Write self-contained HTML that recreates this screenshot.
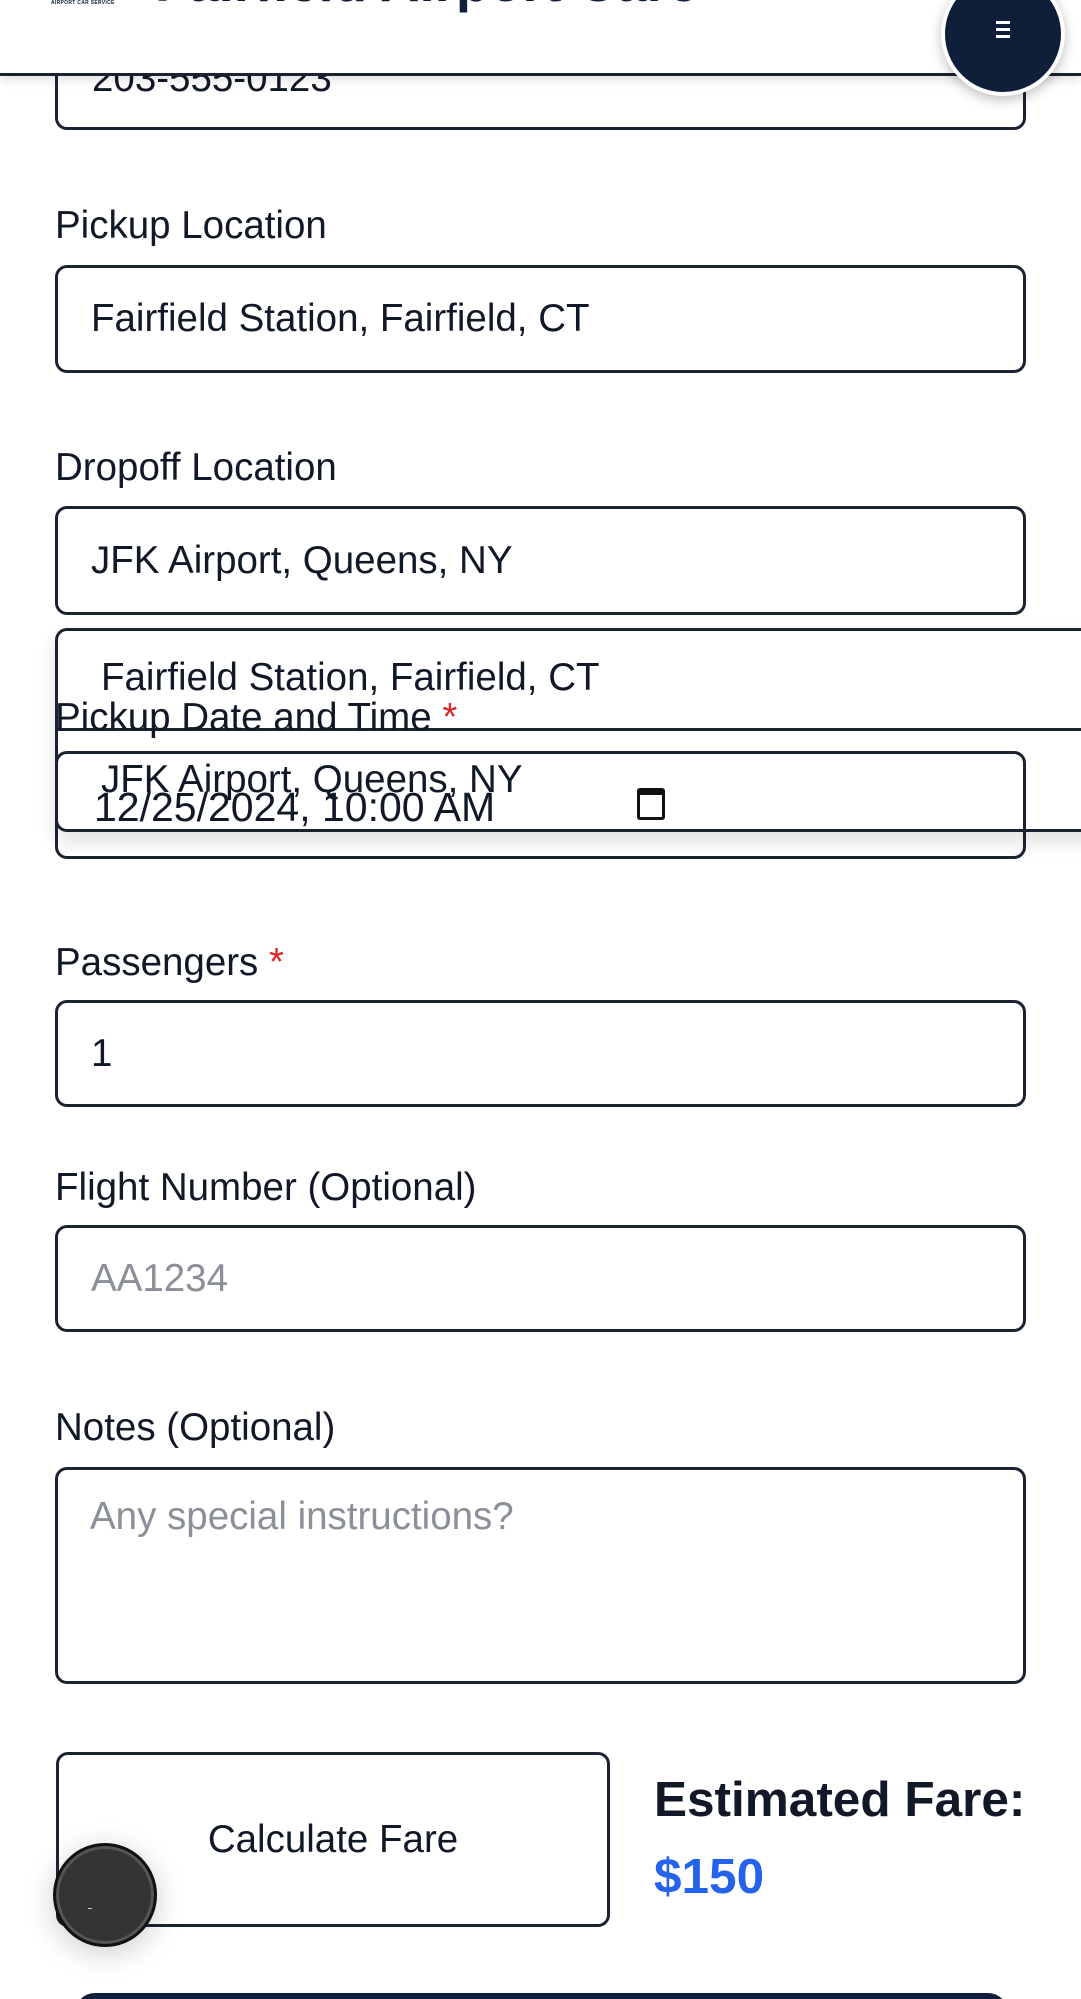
<!DOCTYPE html>
<html><head><meta charset="utf-8"><style>
*{margin:0;padding:0;box-sizing:border-box}
html,body{width:1081px;height:1999px;overflow:hidden;background:#fff;font-family:"Liberation Sans",Arial,sans-serif;color:#111827;position:relative}
.a{position:absolute;white-space:nowrap}
.lbl{font-size:38.5px;line-height:38px}
.box{position:absolute;left:55px;width:971px;border:3px solid #1b2333;border-radius:12px;background:#fff}
.txt{font-size:38.5px;line-height:38px}
.req{color:#dc2626}
.ph{color:#8a8f98}
</style></head><body>

<div class="box" style="top:20px;height:110px"></div>
<div class="a txt" style="left:92px;top:60px">203-555-0123</div>

<div class="a" style="left:0;top:0;width:1081px;height:76px;background:#fff;border-bottom:3px solid #1b2333;box-shadow:0 4px 10px rgba(0,0,0,0.12)"></div>
<div class="a" style="left:51px;top:0;font-size:5px;font-weight:bold;color:#0f1f3a;letter-spacing:0.3px">AIRPORT CAR SERVICE</div>
<div class="a" style="left:155px;top:-44px;font-size:54.5px;line-height:54px;font-weight:bold;color:#0f1f3a">Fairfield Airport Care</div>
<div class="a" style="left:941px;top:-28px;width:124px;height:124px;border-radius:50%;background:#0f1f3a;border:4px solid #fff;box-shadow:0 4px 12px rgba(0,0,0,0.25)"></div>
<div class="a" style="left:996px;top:21px;width:14px;height:3px;background:#fff;box-shadow:0 7px 0 #fff,0 14px 0 #fff"></div>

<div class="a lbl" style="left:55px;top:207px">Pickup Location</div>
<div class="box" style="top:265px;height:108px"></div>
<div class="a txt" style="left:91px;top:300px">Fairfield Station, Fairfield, CT</div>

<div class="a lbl" style="left:55px;top:449px">Dropoff Location</div>
<div class="box" style="top:506px;height:109px"></div>
<div class="a txt" style="left:91px;top:542px">JFK Airport, Queens, NY</div>

<div class="box" style="top:751px;height:108px;background:transparent"></div>
<div class="a" style="left:94px;top:787px;font-size:41px;line-height:40px">12/25/2024, 10:00 AM</div>
<div class="a" style="left:637px;top:788px;width:28px;height:32px;border:3px solid #111;border-top-width:7px;border-radius:3px"></div>

<div class="a" style="left:55px;top:628px;width:1060px;height:204px;border:3px solid #1b2333;border-radius:12px 0 0 12px;box-shadow:0 10px 20px rgba(0,0,0,0.12)"></div>
<div class="a" style="left:55px;top:728px;width:1030px;height:3px;background:#1b2333"></div>
<div class="a txt" style="left:101px;top:659px">Fairfield Station, Fairfield, CT</div>
<div class="a txt" style="left:101px;top:761px">JFK Airport, Queens, NY</div>
<div class="a lbl" style="left:55px;top:699px">Pickup Date and Time <span class="req">*</span></div>

<div class="a lbl" style="left:55px;top:944px">Passengers <span class="req">*</span></div>
<div class="box" style="top:1000px;height:107px"></div>
<div class="a txt" style="left:91px;top:1035px">1</div>

<div class="a lbl" style="left:55px;top:1169px">Flight Number (Optional)</div>
<div class="box" style="top:1225px;height:107px"></div>
<div class="a txt ph" style="left:91px;top:1260px">AA1234</div>

<div class="a lbl" style="left:55px;top:1409px">Notes (Optional)</div>
<div class="box" style="top:1467px;height:217px"></div>
<div class="a txt ph" style="left:90px;top:1498px">Any special instructions?</div>

<div class="a" style="left:56px;top:1752px;width:554px;height:175px;border:3px solid #1b2333;border-radius:12px;background:#fff"></div>
<div class="a txt" style="left:56px;width:554px;text-align:center;top:1821px">Calculate Fare</div>
<div class="a" style="left:654px;top:1775px;font-size:49.5px;line-height:50px;font-weight:bold;color:#111827">Estimated Fare:</div>
<div class="a" style="left:654px;top:1852px;font-size:49.5px;line-height:50px;font-weight:bold;color:#2563eb">$150</div>

<div class="a" style="left:53px;top:1843px;width:104px;height:104px;border-radius:50%;background:#333;border:3px solid #111;box-shadow:0 0 0 3px #555 inset,0 6px 30px rgba(0,0,0,0.2)"></div>
<div class="a" style="left:88px;top:1908px;width:4px;height:1px;background:#ccc"></div>

<div class="a" style="left:75px;top:1993px;width:933px;height:40px;border-radius:20px;background:#0f1f3a"></div>
</body></html>
